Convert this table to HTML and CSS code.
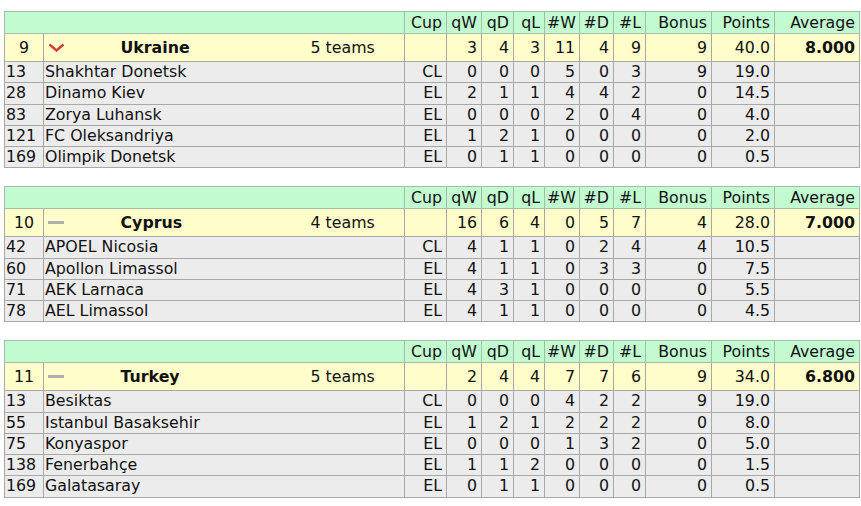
FILE: index.html
```html
<!DOCTYPE html>
<html>
<head>
<meta charset="utf-8">
<link rel="stylesheet" href="styles.css">
</head>
<body>
<div class="page">

<table class="tbl">
<colgroup>
<col class="c-rank"><col class="c-arrow"><col class="c-name"><col class="c-teams">
<col class="c-cup"><col class="c-qw"><col class="c-qd"><col class="c-ql">
<col class="c-w"><col class="c-d"><col class="c-l"><col class="c-bonus"><col class="c-pts"><col class="c-avg">
</colgroup>
<tr class="head"><td colspan="4"></td><td>Cup</td><td>qW</td><td>qD</td><td>qL</td><td>#W</td><td>#D</td><td>#L</td><td>Bonus</td><td>Points</td><td>Average</td></tr>
<tr class="country"><td class="crank">9</td><td class="arrow"><svg width="17" height="9" viewBox="0 0 17 9"><path d="M1.5 1.5 L8.5 7.5 L15.5 1.5" fill="none" stroke="#d23c3c" stroke-width="2.4"/></svg></td><td class="cname">Ukraine</td><td class="cteams">5 teams</td><td></td><td>3</td><td>4</td><td>3</td><td>11</td><td>4</td><td>9</td><td>9</td><td>40.0</td><td class="avg">8.000</td></tr>
<tr class="team"><td class="trank">13</td><td colspan="3" class="tname">Shakhtar Donetsk</td><td>CL</td><td>0</td><td>0</td><td>0</td><td>5</td><td>0</td><td>3</td><td>9</td><td>19.0</td><td></td></tr>
<tr class="team"><td class="trank">28</td><td colspan="3" class="tname">Dinamo Kiev</td><td>EL</td><td>2</td><td>1</td><td>1</td><td>4</td><td>4</td><td>2</td><td>0</td><td>14.5</td><td></td></tr>
<tr class="team"><td class="trank">83</td><td colspan="3" class="tname">Zorya Luhansk</td><td>EL</td><td>0</td><td>0</td><td>0</td><td>2</td><td>0</td><td>4</td><td>0</td><td>4.0</td><td></td></tr>
<tr class="team"><td class="trank">121</td><td colspan="3" class="tname">FC Oleksandriya</td><td>EL</td><td>1</td><td>2</td><td>1</td><td>0</td><td>0</td><td>0</td><td>0</td><td>2.0</td><td></td></tr>
<tr class="team"><td class="trank">169</td><td colspan="3" class="tname">Olimpik Donetsk</td><td>EL</td><td>0</td><td>1</td><td>1</td><td>0</td><td>0</td><td>0</td><td>0</td><td>0.5</td><td></td></tr>
</table>

<table class="tbl">
<colgroup>
<col class="c-rank"><col class="c-arrow"><col class="c-name"><col class="c-teams">
<col class="c-cup"><col class="c-qw"><col class="c-qd"><col class="c-ql">
<col class="c-w"><col class="c-d"><col class="c-l"><col class="c-bonus"><col class="c-pts"><col class="c-avg">
</colgroup>
<tr class="head"><td colspan="4"></td><td>Cup</td><td>qW</td><td>qD</td><td>qL</td><td>#W</td><td>#D</td><td>#L</td><td>Bonus</td><td>Points</td><td>Average</td></tr>
<tr class="country"><td class="crank">10</td><td class="arrow"><span class="dash"></span></td><td class="cname">Cyprus</td><td class="cteams">4 teams</td><td></td><td>16</td><td>6</td><td>4</td><td>0</td><td>5</td><td>7</td><td>4</td><td>28.0</td><td class="avg">7.000</td></tr>
<tr class="team"><td class="trank">42</td><td colspan="3" class="tname">APOEL Nicosia</td><td>CL</td><td>4</td><td>1</td><td>1</td><td>0</td><td>2</td><td>4</td><td>4</td><td>10.5</td><td></td></tr>
<tr class="team"><td class="trank">60</td><td colspan="3" class="tname">Apollon Limassol</td><td>EL</td><td>4</td><td>1</td><td>1</td><td>0</td><td>3</td><td>3</td><td>0</td><td>7.5</td><td></td></tr>
<tr class="team"><td class="trank">71</td><td colspan="3" class="tname">AEK Larnaca</td><td>EL</td><td>4</td><td>3</td><td>1</td><td>0</td><td>0</td><td>0</td><td>0</td><td>5.5</td><td></td></tr>
<tr class="team"><td class="trank">78</td><td colspan="3" class="tname">AEL Limassol</td><td>EL</td><td>4</td><td>1</td><td>1</td><td>0</td><td>0</td><td>0</td><td>0</td><td>4.5</td><td></td></tr>
</table>

<table class="tbl">
<colgroup>
<col class="c-rank"><col class="c-arrow"><col class="c-name"><col class="c-teams">
<col class="c-cup"><col class="c-qw"><col class="c-qd"><col class="c-ql">
<col class="c-w"><col class="c-d"><col class="c-l"><col class="c-bonus"><col class="c-pts"><col class="c-avg">
</colgroup>
<tr class="head"><td colspan="4"></td><td>Cup</td><td>qW</td><td>qD</td><td>qL</td><td>#W</td><td>#D</td><td>#L</td><td>Bonus</td><td>Points</td><td>Average</td></tr>
<tr class="country"><td class="crank">11</td><td class="arrow"><span class="dash"></span></td><td class="cname">Turkey</td><td class="cteams">5 teams</td><td></td><td>2</td><td>4</td><td>4</td><td>7</td><td>7</td><td>6</td><td>9</td><td>34.0</td><td class="avg">6.800</td></tr>
<tr class="team"><td class="trank">13</td><td colspan="3" class="tname">Besiktas</td><td>CL</td><td>0</td><td>0</td><td>0</td><td>4</td><td>2</td><td>2</td><td>9</td><td>19.0</td><td></td></tr>
<tr class="team"><td class="trank">55</td><td colspan="3" class="tname">Istanbul Basaksehir</td><td>EL</td><td>1</td><td>2</td><td>1</td><td>2</td><td>2</td><td>2</td><td>0</td><td>8.0</td><td></td></tr>
<tr class="team"><td class="trank">75</td><td colspan="3" class="tname">Konyaspor</td><td>EL</td><td>0</td><td>0</td><td>0</td><td>1</td><td>3</td><td>2</td><td>0</td><td>5.0</td><td></td></tr>
<tr class="team"><td class="trank">138</td><td colspan="3" class="tname">Fenerbahçe</td><td>EL</td><td>1</td><td>1</td><td>2</td><td>0</td><td>0</td><td>0</td><td>0</td><td>1.5</td><td></td></tr>
<tr class="team"><td class="trank">169</td><td colspan="3" class="tname">Galatasaray</td><td>EL</td><td>0</td><td>1</td><td>1</td><td>0</td><td>0</td><td>0</td><td>0</td><td>0.5</td><td></td></tr>
</table>

</div>
</body>
</html>
```

FILE: styles.css
```css
html, body {
  margin: 0;
  padding: 0;
  background: #ffffff;
}
.page {
  padding: 11px 0 0 4px;
  display: flex;
  flex-direction: column;
  gap: 18px;
  font-family: "DejaVu Sans", Verdana, sans-serif;
  font-size: 15.8px;
  line-height: 18px;
  color: #111;
}
.tbl {
  border-collapse: collapse;
  table-layout: fixed;
  width: 855px;
}
.c-rank { width: 39px; }
.c-arrow { width: 72px; }
.c-name { width: 192px; }
.c-teams { width: 97px; }
.c-cup { width: 42px; }
.c-qw { width: 35px; }
.c-qd { width: 32px; }
.c-ql { width: 31px; }
.c-w { width: 35px; }
.c-d { width: 34px; }
.c-l { width: 32px; }
.c-bonus { width: 66px; }
.c-pts { width: 63px; }
.c-avg { width: 85px; }

.tbl td {
  border: 1px solid #a8a8a8;
  padding: 0 4px 0 2px;
  text-align: right;
  white-space: nowrap;
  overflow: hidden;
}
.head td {
  background: #c3fbd1;
  border-color: #a3bfa9;
  height: 21px;
}
.country td {
  background: #fffdc9;
  height: 27px;
}
.team td {
  background: #ececec;
  height: 20.25px;
}
.country td.crank {
  text-align: center;
  padding: 0;
}
.country td.arrow {
  text-align: left;
  border-right: none;
  padding-left: 4px;
}
.country td.cname {
  text-align: left;
  font-weight: bold;
  border-left: none;
  border-right: none;
  padding-left: 5px;
}
.country td.cteams {
  text-align: left;
  border-left: none;
  padding-left: 3px;
}
.country td.avg {
  font-weight: bold;
}
.arrow svg {
  display: block;
}
.dash {
  display: block;
  width: 16px;
  height: 3px;
  background: #b0b0b0;
}
.team td.trank,
.team td.tname {
  text-align: left;
  padding-left: 1px;
}
```
